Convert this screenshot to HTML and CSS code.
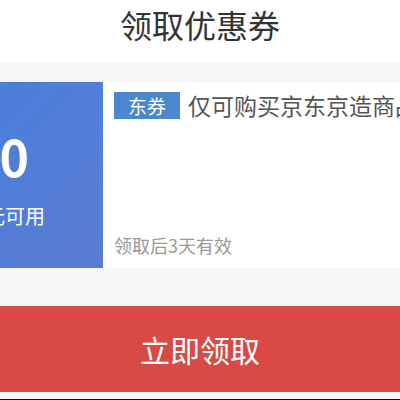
FILE: index.html
```html
<!DOCTYPE html>
<html lang="zh-CN">
<head>
    <meta charset="UTF-8">
    <meta name="viewport" content="width=device-width, initial-scale=1.0">
    <title>领取优惠券</title>
    <link rel="stylesheet" href="styles.css">
</head>
<body>
    <div class="sheet">
        <div class="sheet-header">
            <h1 class="sheet-title">领取优惠券</h1>
        </div>

        <div class="sheet-body">
            <div class="coupon">
                <div class="coupon-value">
                    <div class="coupon-amount">10</div>
                    <div class="coupon-limit">满99元可用</div>
                </div>
                <div class="coupon-info">
                    <div class="coupon-head">
                        <span class="coupon-tag">东券</span>
                        <span class="coupon-name">仅可购买京东京造商品</span>
                    </div>
                    <div class="coupon-expire">领取后3天有效</div>
                </div>
            </div>
        </div>

        <button class="btn-receive">立即领取</button>
        <div class="sheet-foot"></div>
    </div>
</body>
</html>
```

FILE: styles.css
```css
body {
    margin: 0;
    font-family: "Noto Sans CJK SC", "Noto Sans", sans-serif;
    background-color: #f6f6f6;
    overflow: hidden;
}
.sheet {
    width: 400px;
    height: 400px;
    display: flex;
    flex-direction: column;
}
.sheet-header {
    height: 63px;
    box-sizing: border-box;
    padding-top: 4px;
    background: white;
    text-align: center;
}
.sheet-title {
    margin: 0;
    font-size: 32px;
    line-height: 40px;
    font-weight: normal;
    color: #333;
}
.sheet-body {
    padding-top: 19px;
    height: 243px;
    box-sizing: border-box;
}
.coupon {
    display: flex;
    height: 186px;
    background: white;
}
.coupon-value {
    width: 103px;
    flex-shrink: 0;
    display: flex;
    flex-direction: column;
    align-items: flex-end;
    background: linear-gradient(135deg, #4a7fdb, #5c7bd2);
    color: white;
    padding-top: 48px;
    box-sizing: border-box;
    overflow: hidden;
    white-space: nowrap;
}
.coupon-amount {
    font-size: 50px;
    line-height: 50px;
    font-weight: bold;
    margin-right: 74px;
}
.coupon-limit {
    font-size: 20px;
    line-height: 28px;
    margin-top: 22px;
    margin-right: 58px;
}
.coupon-info {
    flex: 1;
    min-width: 0;
    display: flex;
    flex-direction: column;
    padding: 10px 0 11px 11px;
    overflow: hidden;
}
.coupon-head {
    display: flex;
    align-items: center;
    white-space: nowrap;
}
.coupon-tag {
    flex-shrink: 0;
    background-color: #4b86d1;
    color: white;
    font-size: 19px;
    line-height: 27px;
    padding: 0 14px;
}
.coupon-name {
    margin-left: 8px;
    font-size: 23px;
    line-height: 27px;
    color: #555;
}
.coupon-expire {
    margin-top: auto;
    font-size: 18px;
    line-height: 24px;
    color: #999;
}
.btn-receive {
    height: 86px;
    border: none;
    margin: 0;
    padding: 0;
    background-color: #d94a46;
    color: white;
    font-family: inherit;
    font-size: 30px;
    cursor: pointer;
}
.sheet-foot {
    flex: 1;
    background: #f8f8f8;
    border-bottom: 1px solid #111;
}
```
